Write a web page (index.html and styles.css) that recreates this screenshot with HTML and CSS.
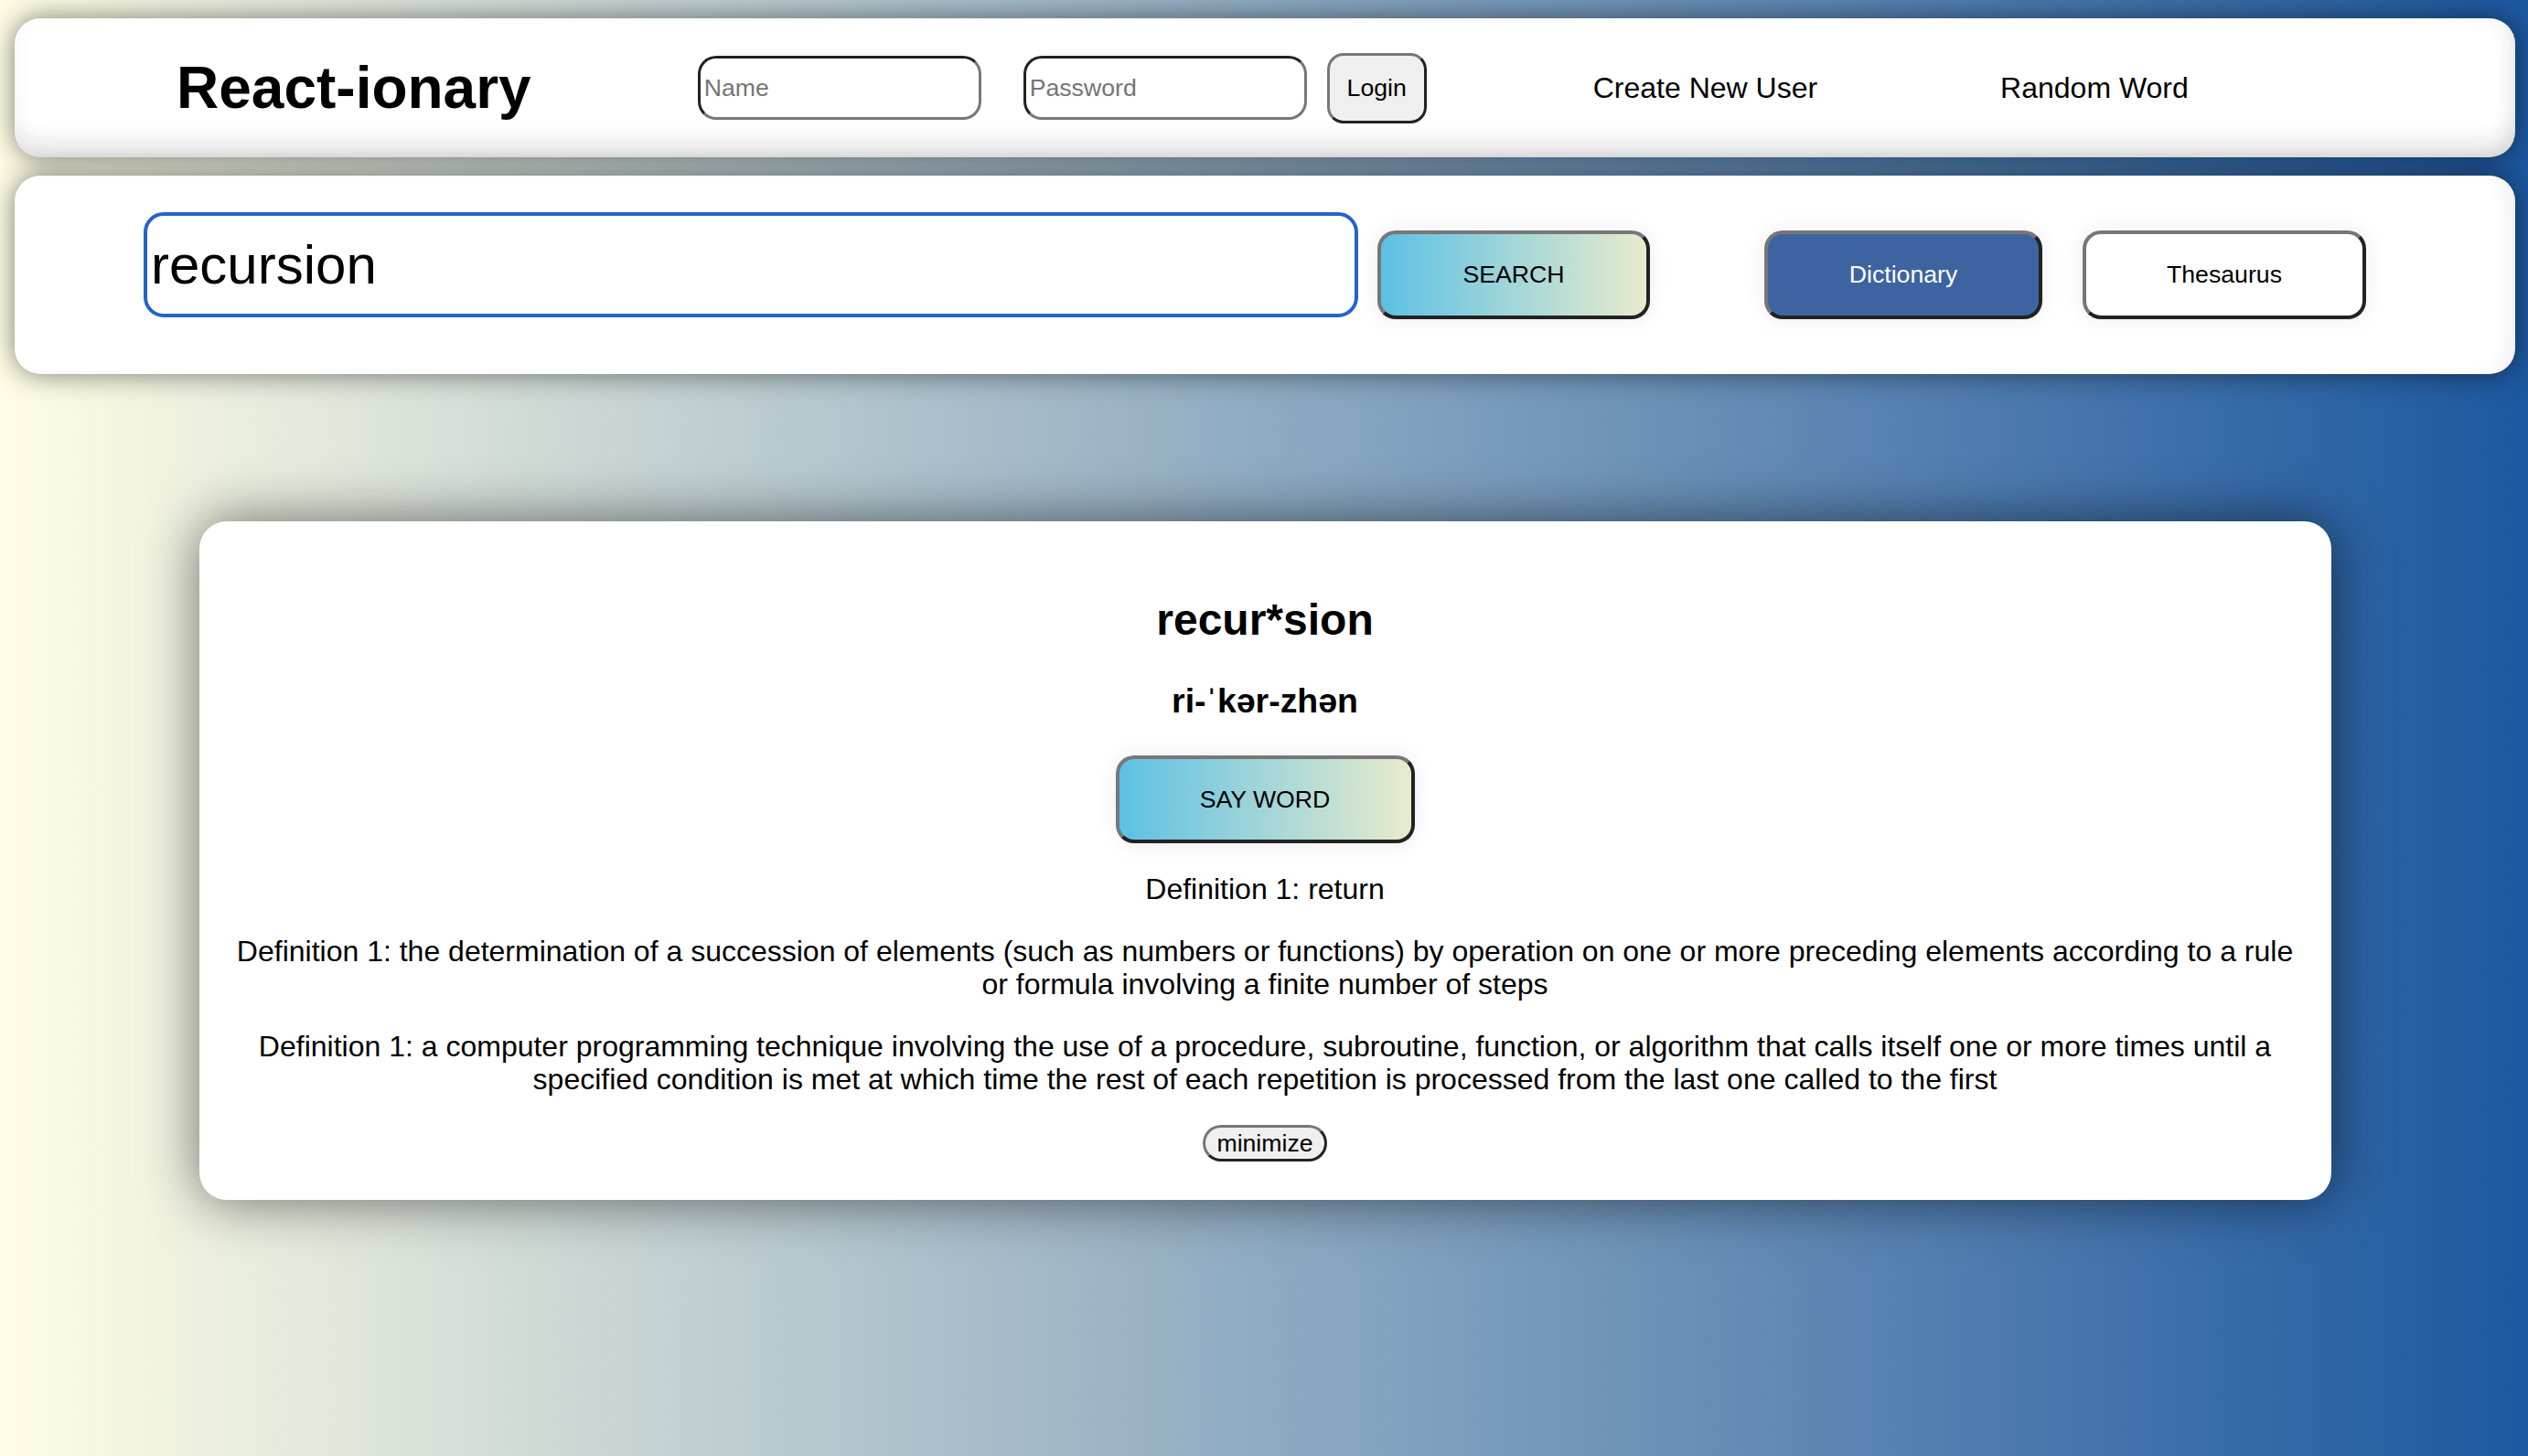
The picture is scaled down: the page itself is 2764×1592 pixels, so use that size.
FILE: index.html
```html
<!DOCTYPE html>
<html lang="en">
<head>
<meta charset="utf-8">
<title>React-ionary</title>
<link rel="stylesheet" href="styles.css">
</head>
<body>
<div class="page">
  <header class="topbar">
    <h1 class="logo">React-ionary</h1>
    <form class="login">
      <input class="field" type="text" placeholder="Name">
      <input class="field field-pass" type="password" placeholder="Password">
      <button class="btn-login" type="button">Login</button>
    </form>
    <a class="nav-link nav-create">Create New User</a>
    <a class="nav-link nav-random">Random Word</a>
  </header>

  <section class="searchbar">
    <input class="search-input" type="text" value="recursion" autofocus>
    <button class="btn btn-gradient btn-search" type="button">SEARCH</button>
    <button class="btn btn-dict" type="button">Dictionary</button>
    <button class="btn btn-thes" type="button">Thesaurus</button>
  </section>

  <main class="result">
    <h2 class="word">recur*sion</h2>
    <h3 class="pron">ri-ˈkər-zhən</h3>
    <button class="btn btn-gradient btn-say" type="button">SAY WORD</button>
    <p>Definition 1: return</p>
    <p>Definition 1: the determination of a succession of elements (such as numbers or functions) by operation on one or more preceding elements according to a rule or formula involving a finite number of steps</p>
    <p>Definition 1: a computer programming technique involving the use of a procedure, subroutine, function, or algorithm that calls itself one or more times until a specified condition is met at which time the rest of each repetition is processed from the last one called to the first</p>
    <button class="btn-min" type="button">minimize</button>
  </main>
</div>
</body>
</html>
```

FILE: styles.css
```css
*, *::before, *::after { box-sizing: border-box; }

html, body {
  margin: 0;
  min-height: 100%;
}

body {
  min-height: 100vh;
  background: linear-gradient(to right, #fffde4, #1d58a0);
  font-family: "Liberation Sans", Arial, sans-serif;
  color: #000;
}

.page {
  padding: 20px 14px 0 16px;
}

/* ---------- top bar ---------- */
.topbar {
  display: flex;
  align-items: center;
  height: 152px;
  padding-left: 177px;
  background: #fff;
  border-radius: 28px;
  box-shadow: 0 0 30px rgba(0, 0, 0, 0.5),
              inset 0 -24px 28px -10px rgba(0, 0, 0, 0.12),
              inset -16px 0 22px -10px rgba(0, 0, 0, 0.07);
}

.logo {
  margin: 0;
  font-size: 64px;
  font-weight: 700;
}

.login {
  display: flex;
  align-items: center;
  margin: 0 0 0 182px;
}

.field {
  width: 310px;
  height: 70px;
  padding: 0 4px;
  border: 3px solid;
  border-color: #222 #777 #777 #222;
  border-radius: 20px;
  background: #fff;
  font: 26.67px "Liberation Sans", Arial, sans-serif;
  color: #000;
  outline: none;
}

.field::placeholder { color: #757575; }

.field-pass { margin-left: 46px; }

.btn-login {
  margin-left: 22px;
  width: 109px;
  height: 77px;
  padding: 0;
  border: 3px solid;
  border-color: #777 #222 #222 #777;
  border-radius: 18px;
  background: #efefef;
  font: 26.67px "Liberation Sans", Arial, sans-serif;
  color: #000;
}

.nav-link {
  font-size: 32px;
  color: #000;
  text-decoration: none;
}

.nav-create { margin-left: 182px; }
.nav-random { margin-left: 200px; }

/* ---------- search bar ---------- */
.searchbar {
  display: flex;
  align-items: flex-start;
  margin-top: 20px;
  height: 217px;
  padding: 40px 0 0 141px;
  background: #fff;
  border-radius: 28px;
  box-shadow: 0 0 30px rgba(0, 0, 0, 0.5),
              inset -16px 0 22px -10px rgba(0, 0, 0, 0.07);
}

.search-input {
  width: 1328px;
  height: 115px;
  padding: 0 4px;
  border: 4px solid #2563c8;
  border-radius: 22px;
  font: 60px "Liberation Sans", Arial, sans-serif;
  color: #000;
  caret-color: #000;
  outline: none;
  background: #fff;
}

.btn {
  height: 97px;
  margin-top: 20px;
  padding: 0;
  border: 4px solid;
  border-color: #777 #222 #222 #777;
  border-radius: 20px;
  font: 26.67px "Liberation Sans", Arial, sans-serif;
  box-shadow: 0 0 24px rgba(0, 0, 0, 0.08);
}

.btn-gradient {
  background: linear-gradient(to right, #5dc0e4, #e8ebcc);
  color: #000;
}

.btn-search { width: 298px; margin-left: 21px; }

.btn-dict {
  width: 304px;
  margin-left: 125px;
  background: #3d64a0;
  color: #fff;
}

.btn-thes {
  width: 310px;
  margin-left: 44px;
  background: #fff;
  color: #000;
}

/* ---------- result card ---------- */
.result {
  width: 2331px;
  margin: 161px auto 0;
  padding: 40px 30px 42px;
  background: #fff;
  border-radius: 30px;
  box-shadow: 0 0 60px rgba(0, 0, 0, 0.55);
  text-align: center;
}

.word {
  margin: 40px 0;
  font-size: 48px;
  font-weight: 700;
}

.pron {
  margin: 40px 0 38px;
  font-size: 37.44px;
  font-weight: 700;
}

.btn-say {
  display: block;
  width: 327px;
  height: 96px;
  margin: 0 auto;
}

.result p {
  margin: 32px 0;
  font-size: 32px;
  line-height: 36px;
}

.btn-min {
  display: block;
  width: 136px;
  height: 40px;
  margin: 32px auto 0;
  padding: 0;
  border: 3px solid;
  border-color: #777 #222 #222 #777;
  border-radius: 20px;
  background: #efefef;
  font: 26.67px "Liberation Sans", Arial, sans-serif;
  color: #000;
}
```
